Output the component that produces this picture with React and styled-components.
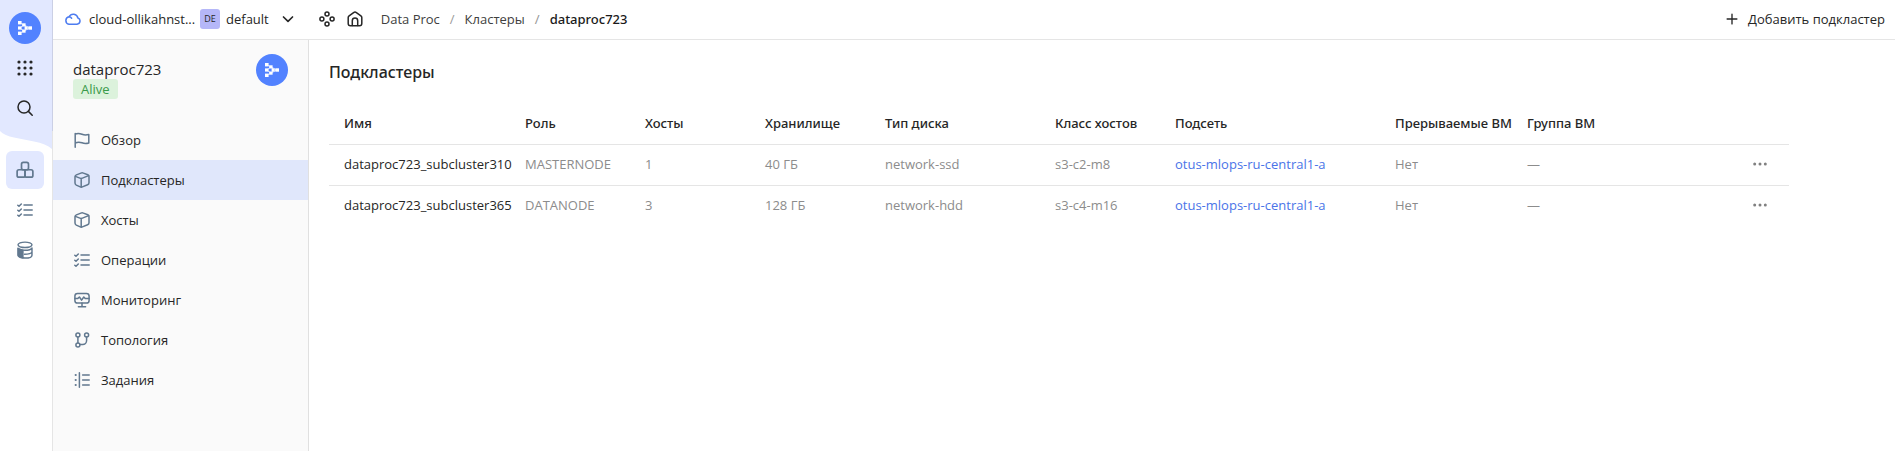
import React from 'react';
import styled, { createGlobalStyle, css } from 'styled-components';

const line = 'rgba(0, 0, 0, 0.1)';
const ink = '#262626';
const slate = '#61788f';

const GlobalStyle = createGlobalStyle`
  * { box-sizing: border-box; }
  body {
    margin: 0;
    background: #fff;
    color: ${ink};
    font-family: "Open Sans", "Noto Sans", sans-serif;
    font-size: 13px;
    line-height: 18px;
  }
  a { color: inherit; text-decoration: none; }
  button { font: inherit; color: inherit; border: 0; padding: 0; background: none; cursor: pointer; }
  ul, ol { list-style: none; margin: 0; padding: 0; }
  svg { display: block; flex: none; }
`;

const mediumText = css`
  font-family: "Noto Sans", sans-serif;
  font-weight: 500;
`;

/* ---------- icons ---------- */

const Glyph = styled.svg.attrs((p) => ({
  viewBox: '0 0 16 16',
  fill: p.$solid ? 'currentColor' : 'none',
  stroke: p.$solid ? 'none' : 'currentColor',
  strokeWidth: p.$weight || 1.5,
  strokeLinecap: 'round',
  strokeLinejoin: 'round',
  'aria-hidden': true,
}))`
  width: ${(p) => p.$size || 16}px;
  height: ${(p) => p.$size || 16}px;
`;

const ProcMark = () => (
  <svg width="32" height="32" viewBox="0 0 32 32" aria-hidden="true">
    <circle cx="16" cy="16" r="16" fill="#5282ff" />
    <path
      d="M10.5 10.6L15 13L21 16L15 19L10.5 21.4M10.5 16L15 13M10.5 16L15 19M15 13L17.8 16L15 19M17.8 16H21"
      stroke="#fff"
      strokeWidth="0.7"
      fill="none"
    />
    <g fill="#fff">
      <rect x="9" y="9" width="3.6" height="3.4" />
      <rect x="9" y="14.4" width="3.6" height="3.2" />
      <rect x="9" y="19.6" width="3.6" height="3.4" />
      <rect x="13.2" y="11.3" width="3.4" height="3.2" />
      <rect x="13.2" y="17.5" width="3.4" height="3.2" />
      <rect x="15.6" y="14.5" width="3" height="3" />
      <rect x="19.4" y="14.3" width="3.6" height="3.4" />
    </g>
  </svg>
);

const Cloud = () => (
  <Glyph>
    <path d="M4 13.2h8a3.2 3.2 0 0 0 .9-6.2A4.7 4.7 0 0 0 4.1 5.7 3.8 3.8 0 0 0 4 13.2ZM4.2 5.8A3.4 3.4 0 0 1 6.6 7.2" />
  </Glyph>
);

const ChevronDown = () => (
  <Glyph $weight={1.7}>
    <path d="M3.5 6L8 10.3L12.5 6" />
  </Glyph>
);

const Services = () => (
  <Glyph>
    <circle cx="8" cy="2.9" r="2" />
    <circle cx="8" cy="13.1" r="2" />
    <circle cx="2.9" cy="8" r="2" />
    <circle cx="13.1" cy="8" r="2" />
  </Glyph>
);

const House = () => (
  <Glyph>
    <path d="M1.2 6.6C1.2 5.9 1.6 5.3 2.1 4.9L6.6 1.6a2.4 2.4 0 0 1 2.8 0L13.9 4.9c.5.4.9 1 .9 1.7v5.9a2.3 2.3 0 0 1-2.3 2.3h-9a2.3 2.3 0 0 1-2.3-2.3Z" />
    <path d="M5.3 14.5V9.7a2.7 2.7 0 0 1 5.4 0v4.8" />
  </Glyph>
);

const Plus = () => (
  <Glyph $size={12} $weight={1.8}>
    <path d="M8 1.5v13M1.5 8h13" />
  </Glyph>
);

const Dots = () => (
  <Glyph $solid>
    <circle cx="2.7" cy="8" r="1.5" />
    <circle cx="8" cy="8" r="1.5" />
    <circle cx="13.3" cy="8" r="1.5" />
  </Glyph>
);

const Apps = () => (
  <Glyph $solid>
    {[2, 8, 14].map((y) =>
      [2, 8, 14].map((x) => <circle key={`${x}-${y}`} cx={x} cy={y} r="1.6" />)
    )}
  </Glyph>
);

const Search = () => (
  <Glyph>
    <circle cx="7" cy="7" r="6" />
    <path d="M11.4 11.4L15.2 15.2" />
  </Glyph>
);

const Cubes = () => (
  <Glyph $size={18}>
    <rect x="4.9" y="1.2" width="6.2" height="6.6" rx="1.6" />
    <rect x="1" y="7.8" width="7" height="6.6" rx="1.6" />
    <rect x="8" y="7.8" width="7" height="6.6" rx="1.6" />
  </Glyph>
);

const Checks = () => (
  <Glyph>
    <path d="M7 3h8.2M7 8h8.2M7 13h8.2M.8 3.2l1.2 1.1L4.3 2M.8 8.2L2 9.3L4.3 7M.8 13.2L2 14.3L4.3 12" />
  </Glyph>
);

const Database = () => (
  <Glyph $size={18} $weight={1.3}>
    <path d="M1.4 6L6.8 7.8V15.4C3.6 15.2 1.4 14 1.4 12.6Z" fill="currentColor" stroke="none" />
    <ellipse cx="8" cy="3.4" rx="6.2" ry="2.4" />
    <path d="M1.8 6.4C2.6 7.6 5 8.3 8 8.3s6.2-.8 6.2-2.2v6.5c0 1.5-2.8 2.6-6.2 2.6S1.8 14.1 1.8 12.6ZM7.5 11.8c3.4 0 6.7-.8 6.7-2.3" />
  </Glyph>
);

const Flag = () => (
  <Glyph>
    <path d="M1.2 1.6V15.2M1.2 2.2C4 .6 6 1.4 8 2.2s4 1 6.8.2v8.6c-2.8.8-4.8.6-6.8-.2s-4-1.2-6.8.2" />
  </Glyph>
);

const Cube = () => (
  <Glyph>
    <path d="M6.9 1.1L2.4 2.9C1.6 3.2 1 4 1 4.9v6.2c0 .9.5 1.6 1.3 2l4 1.8c.7.3 1.4.3 2.1 0l5.2-2.1c.8-.3 1.4-1.1 1.4-2V4.6c0-.8-.5-1.5-1.2-1.8L9.4 1.1c-.8-.3-1.7-.3-2.5 0Z" />
    <path d="M1.4 4.4L7.2 6.6L14.6 3.6M7.2 6.6V15" />
  </Glyph>
);

const Monitor = () => (
  <Glyph>
    <rect x="0.9" y="1.4" width="14.2" height="9.6" rx="2.6" />
    <path d="M1 6.6h2.6L5.4 5l2.2 3.2L9.8 5l1.4 1.6H15M8 11v3.6M4.4 14.8h7.2" />
  </Glyph>
);

const Topology = () => (
  <Glyph>
    <circle cx="3.9" cy="3.1" r="2" />
    <circle cx="3.9" cy="12.9" r="2" />
    <circle cx="12.6" cy="3.1" r="2" />
    <path d="M3.9 5.1v5.8M12.6 5.1V8.6a4 4 0 0 1-4 4H6" />
  </Glyph>
);

const Jobs = () => (
  <Glyph>
    <path d="M5.4.8v14.4M8.6 3h6.6M8.6 8h6.6M8.6 13h6.6" />
    <g fill="currentColor" stroke="none">
      <circle cx="1.7" cy="3" r="1.1" />
      <circle cx="1.7" cy="8" r="1.1" />
      <circle cx="1.7" cy="13" r="1.1" />
    </g>
  </Glyph>
);

/* ---------- service rail ---------- */

const Shell = styled.div`
  display: flex;
  min-height: 100vh;
`;

const Rail = styled.nav`
  display: flex;
  flex-direction: column;
  flex: none;
  width: 53px;
`;

const RailTop = styled.div`
  display: flex;
  flex-direction: column;
  align-items: center;
  padding: 12px 2px 4px 0;
  gap: 2px;
  background: #e2e8ff;
  border-right: 1px solid ${line};
`;

const RailWave = styled.div`
  border-right: 1px solid ${line};

  svg { width: 100%; height: 18px; }
`;

const RailList = styled.ul`
  display: flex;
  flex-direction: column;
  align-items: center;
  flex: 1;
  gap: 2px;
  padding: 2px 2px 0 0;
  border-right: 1px solid ${line};
`;

const RailButton = styled.button`
  display: flex;
  align-items: center;
  justify-content: center;
  width: 38px;
  height: 38px;
  border-radius: 6px;
  color: ${(p) => (p.$dark ? ink : slate)};
  background: ${(p) => (p.$active ? '#e2e8ff' : 'transparent')};
`;

const RailLogo = styled.a`
  display: block;
  margin-bottom: 3px;
  border-radius: 50%;
`;

/* ---------- top bar ---------- */

const Workspace = styled.div`
  display: flex;
  flex-direction: column;
  flex: 1;
  min-width: 0;
`;

const TopBar = styled.header`
  display: flex;
  align-items: center;
  height: 40px;
  padding: 0 10px 1px 12px;
  border-bottom: 1px solid ${line};
  white-space: nowrap;
`;

const CloudLink = styled.a`
  display: flex;
  align-items: center;
  gap: 8px;
  width: 135px;

  svg { color: #4d7cf0; }
`;

const FolderButton = styled.button`
  display: flex;
  align-items: center;
  gap: 6px;

  svg { margin-left: 5px; }
`;

const FolderBadge = styled.span`
  width: 20px;
  height: 20px;
  border-radius: 3px;
  background: #b5b7f8;
  font-size: 9px;
  line-height: 20px;
  text-align: center;
`;

const TopIcons = styled.div`
  display: flex;
  gap: 12px;
  margin: 0 18px 0 23px;
`;

const Crumbs = styled.ol`
  display: flex;
  align-items: center;
`;

const Crumb = styled.li`
  color: #404040;
  ${(p) => p.$current && css`${mediumText} color: #1a1a1a;`}

  &:not(:first-child)::before {
    content: '/';
    margin: 0 10px;
    font-weight: 400;
    color: #999;
  }
`;

const AddButton = styled.button`
  display: flex;
  align-items: center;
  gap: 10px;
  margin-left: auto;
`;

/* ---------- cluster side bar ---------- */

const Body = styled.div`
  display: flex;
  flex: 1;
`;

const Side = styled.aside`
  flex: none;
  width: 256px;
  background: #fafafa;
  border-right: 1px solid ${line};
`;

const SideHead = styled.div`
  display: flex;
  justify-content: space-between;
  align-items: flex-start;
  height: 80px;
  padding: 14px 20px 0;
`;

const ClusterName = styled.div`
  padding-top: 5px;
  font-size: 15px;
  line-height: 20px;
`;

const Status = styled.span`
  display: block;
  width: fit-content;
  padding: 0 8px;
  border-radius: 3px;
  background: #dcf2dc;
  color: #3a9a4a;
  font-size: 13px;
`;

const NavLink = styled.a`
  display: flex;
  align-items: center;
  gap: 11px;
  height: 40px;
  padding: 0 21px;
  ${(p) => p.$active && css`background: #e0e7fb;`}

  svg { color: ${slate}; }
`;

/* ---------- content ---------- */

const Main = styled.main`
  flex: 1;
  min-width: 0;
  padding: 20px;
`;

const Title = styled.h1`
  ${mediumText}
  margin: 0 0 20px;
  font-size: 16px;
  line-height: 24px;
`;

const Table = styled.table`
  width: 100%;
  max-width: 1460px;
  border-spacing: 0;
  table-layout: fixed;
`;

const Row = styled.tr``;

const Col = styled.col`
  width: ${(p) => p.$width};
`;

const cellBox = css`
  height: 41px;
  padding: 0 0 2px 15px;
  text-align: left;
  white-space: nowrap;
`;

const Head = styled.th`
  ${cellBox}
  ${mediumText}
  border-bottom: 1px solid ${line};
`;

const Cell = styled.td`
  ${cellBox}
  color: ${(p) => (p.$strong ? ink : '#8c8c8c')};
  border-bottom: 1px solid ${line};

  ${Row}:last-child > & { border-bottom-color: transparent; }
`;

const SubnetLink = styled.a`
  color: #4a74e8;
`;

const MoreButton = styled.button`
  display: flex;
  justify-content: center;
  width: 28px;
  margin: 0 15px 0 auto;
  color: #808080;
`;

const sections = [
  ['Обзор', Flag],
  ['Подкластеры', Cube],
  ['Хосты', Cube],
  ['Операции', Checks],
  ['Мониторинг', Monitor],
  ['Топология', Topology],
  ['Задания', Jobs],
];

const columns = [
  ['Имя', '181px'],
  ['Роль', '120px'],
  ['Хосты', '120px'],
  ['Хранилище', '120px'],
  ['Тип диска', '170px'],
  ['Класс хостов', '120px'],
  ['Подсеть', '220px'],
  ['Прерываемые ВМ', '132px'],
  ['Группа ВМ', 'auto'],
];

const subclusters = [
  ['dataproc723_subcluster310', 'MASTERNODE', 1, '40 ГБ', 'network-ssd', 's3-c2-m8'],
  ['dataproc723_subcluster365', 'DATANODE', 3, '128 ГБ', 'network-hdd', 's3-c4-m16'],
];

export default function App() {
  return (
    <>
      <GlobalStyle />
      <Shell>
        <Rail aria-label="Сервисы">
          <RailTop>
            <RailLogo href="#" aria-label="Data Proc"><ProcMark /></RailLogo>
            <RailButton $dark aria-label="Все сервисы"><Apps /></RailButton>
            <RailButton $dark aria-label="Поиск"><Search /></RailButton>
          </RailTop>
          <RailWave>
            <svg viewBox="0 0 52 18" preserveAspectRatio="none" aria-hidden="true">
              <path d="M0 0H52V18C48 14.5 42 12.2 34 10.6L14 6.6C8 5.4 3 3.4 0 0Z" fill="#e2e8ff" />
            </svg>
          </RailWave>
          <RailList>
            <li><RailButton $active aria-label="Кластеры"><Cubes /></RailButton></li>
            <li><RailButton aria-label="Операции"><Checks /></RailButton></li>
            <li><RailButton aria-label="Хранилища"><Database /></RailButton></li>
          </RailList>
        </Rail>

        <Workspace>
          <TopBar>
            <CloudLink href="#"><Cloud />cloud-ollikahnst...</CloudLink>
            <FolderButton>
              <FolderBadge>DE</FolderBadge>
              default
              <ChevronDown />
            </FolderButton>
            <TopIcons>
              <a href="#" aria-label="Сервисы"><Services /></a>
              <a href="#" aria-label="Главная"><House /></a>
            </TopIcons>
            <Crumbs>
              <Crumb><a href="#">Data Proc</a></Crumb>
              <Crumb><a href="#">Кластеры</a></Crumb>
              <Crumb $current aria-current="page">dataproc723</Crumb>
            </Crumbs>
            <AddButton><Plus />Добавить подкластер</AddButton>
          </TopBar>

          <Body>
            <Side>
              <SideHead>
                <ClusterName>
                  dataproc723
                  <Status>Alive</Status>
                </ClusterName>
                <ProcMark />
              </SideHead>
              <nav>
                <ul>
                  {sections.map(([label, Icon]) => (
                    <li key={label}>
                      <NavLink href="#" $active={label === 'Подкластеры'}>
                        <Icon />
                        {label}
                      </NavLink>
                    </li>
                  ))}
                </ul>
              </nav>
            </Side>

            <Main>
              <Title>Подкластеры</Title>
              <Table>
                <colgroup>
                  {columns.map(([name, width]) => <Col key={name} $width={width} />)}
                  <Col $width="60px" />
                </colgroup>
                <thead>
                  <tr>
                    {columns.map(([name]) => <Head key={name} scope="col">{name}</Head>)}
                    <Head as="td" />
                  </tr>
                </thead>
                <tbody>
                  {subclusters.map(([name, ...values]) => (
                    <Row key={name}>
                      <Cell $strong>{name}</Cell>
                      {values.map((value) => <Cell key={value}>{value}</Cell>)}
                      <Cell><SubnetLink href="#">otus-mlops-ru-central1-a</SubnetLink></Cell>
                      <Cell>Нет</Cell>
                      <Cell>—</Cell>
                      <Cell><MoreButton aria-label="Действия"><Dots /></MoreButton></Cell>
                    </Row>
                  ))}
                </tbody>
              </Table>
            </Main>
          </Body>
        </Workspace>
      </Shell>
    </>
  );
}
